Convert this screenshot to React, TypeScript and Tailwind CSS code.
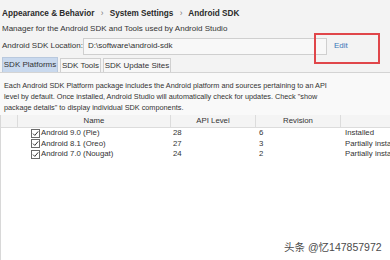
import React from "react";

const rows = [
  { name: "Android 9.0 (Pie)", api: "28", rev: "6", status: "Installed" },
  { name: "Android 8.1 (Oreo)", api: "27", rev: "3", status: "Partially installed" },
  { name: "Android 7.0 (Nougat)", api: "24", rev: "2", status: "Partially installed" },
];

function Check() {
  return (
    <svg width="9" height="9" viewBox="0 0 9 9" className="shrink-0">
      <rect x="0.5" y="0.5" width="8" height="8" fill="#fff" stroke="#6a6a6a" />
      <path d="M2 4.6 L3.8 6.4 L7.2 2.4" fill="none" stroke="#333" strokeWidth="1" />
    </svg>
  );
}

export default function App() {
  return (
    <div
      className="relative w-[390px] h-[260px] overflow-hidden bg-[#f3f3f3] text-[#222]"
      style={{ fontFamily: '"Liberation Sans", Arial, sans-serif' }}
    >
      <div className="flex flex-col">
        <div className="h-[24px] whitespace-nowrap pl-[2px] pt-[8px] text-[8.2px] font-bold leading-[12px] text-[#2a2a2a]">
          Appearance &amp; Behavior <span className="px-[4px] font-normal text-[#777]">›</span> System Settings{" "}
          <span className="px-[4px] font-normal text-[#777]">›</span> Android SDK
        </div>
        <div className="h-[10px] whitespace-nowrap pl-[2px] text-[8px] leading-[10px] text-[#333]">
          Manager for the Android SDK and Tools used by Android Studio
        </div>
        <div className="mt-[3px] flex h-[18px] items-center">
          <div className="w-[83px] whitespace-nowrap pl-[2px] text-[8px] text-[#333]">Android SDK Location:</div>
          <div className="flex h-[17px] w-[244px] items-center border border-[#cfcfcf] bg-[#f8f8f8] pl-[4px] text-[8px] text-[#333]">
            D:\software\android-sdk
          </div>
          <div className="pl-[7px] text-[8px] text-[#3a76b8]">Edit</div>
        </div>
        <div className="mt-[2px] flex h-[15px] items-end whitespace-nowrap pl-[2px] text-[8px] text-[#333]">
          <div className="flex h-[15px] w-[56px] items-center justify-center border border-b-0 border-[#b9c9de] bg-[#c9d9ee]">
            SDK Platforms
          </div>
          <div className="ml-[2px] flex h-[14px] w-[41px] items-center justify-center border border-b-0 border-[#d0d0d0] bg-[#f7f7f7]">
            SDK Tools
          </div>
          <div className="ml-[2px] flex h-[14px] w-[68px] items-center justify-center border border-b-0 border-[#d0d0d0] bg-[#f7f7f7]">
            SDK Update Sites
          </div>
        </div>
        <div className="flex flex-col border-t border-[#d4d4d4] bg-[#f9f9f9]">
          <div className="whitespace-nowrap px-[4px] pt-[7px] text-[7.3px] leading-[11px] text-[#333]">
            <div>Each Android SDK Platform package includes the Android platform and sources pertaining to an API</div>
            <div>level by default. Once installed, Android Studio will automatically check for updates. Check "show</div>
            <div>package details" to display individual SDK components.</div>
          </div>
          <div className="mt-[2px] flex">
            <div className="w-[5px] border-r border-[#d8d8d8] bg-[#ececec]" />
            <div className="flex h-[160px] flex-1 flex-col bg-white">
              <div className="flex h-[13px] items-center border-b border-[#dcdcdc] bg-[#f4f4f4] text-[7.8px] text-[#333]">
                <div className="h-full w-[17px] border-r border-[#dcdcdc]" />
                <div className="flex h-full w-[153px] items-center justify-center border-r border-[#dcdcdc]">Name</div>
                <div className="flex h-full w-[85px] items-center justify-center border-r border-[#dcdcdc]">API Level</div>
                <div className="flex h-full w-[85px] items-center justify-center border-r border-[#dcdcdc]">Revision</div>
                <div className="flex-1" />
              </div>
              <div className="text-[7.8px] text-[#333]">
                {rows.map((r) => (
                  <div key={r.name} className="flex h-[10.5px] items-center whitespace-nowrap">
                    <div className="w-[30px] shrink-0" />
                    <div className="flex w-[142px] shrink-0 items-center gap-[1px]">
                      <Check />
                      <span>{r.name}</span>
                    </div>
                    <div className="w-[86px] shrink-0">{r.api}</div>
                    <div className="w-[86px] shrink-0">{r.rev}</div>
                    <div>{r.status}</div>
                  </div>
                ))}
              </div>
            </div>
          </div>
        </div>
      </div>
      <div className="absolute left-[314px] top-[33px] h-[31px] w-[66px] border-2 border-[#e0464a]" />
      <div
        className="absolute left-[284px] top-[240px] whitespace-nowrap text-[10.5px] text-[#4a4a4a]"
        style={{ fontFamily: '"Liberation Sans", "Noto Sans CJK SC", sans-serif' }}
      >
        头条 @忆147857972
      </div>
    </div>
  );
}
